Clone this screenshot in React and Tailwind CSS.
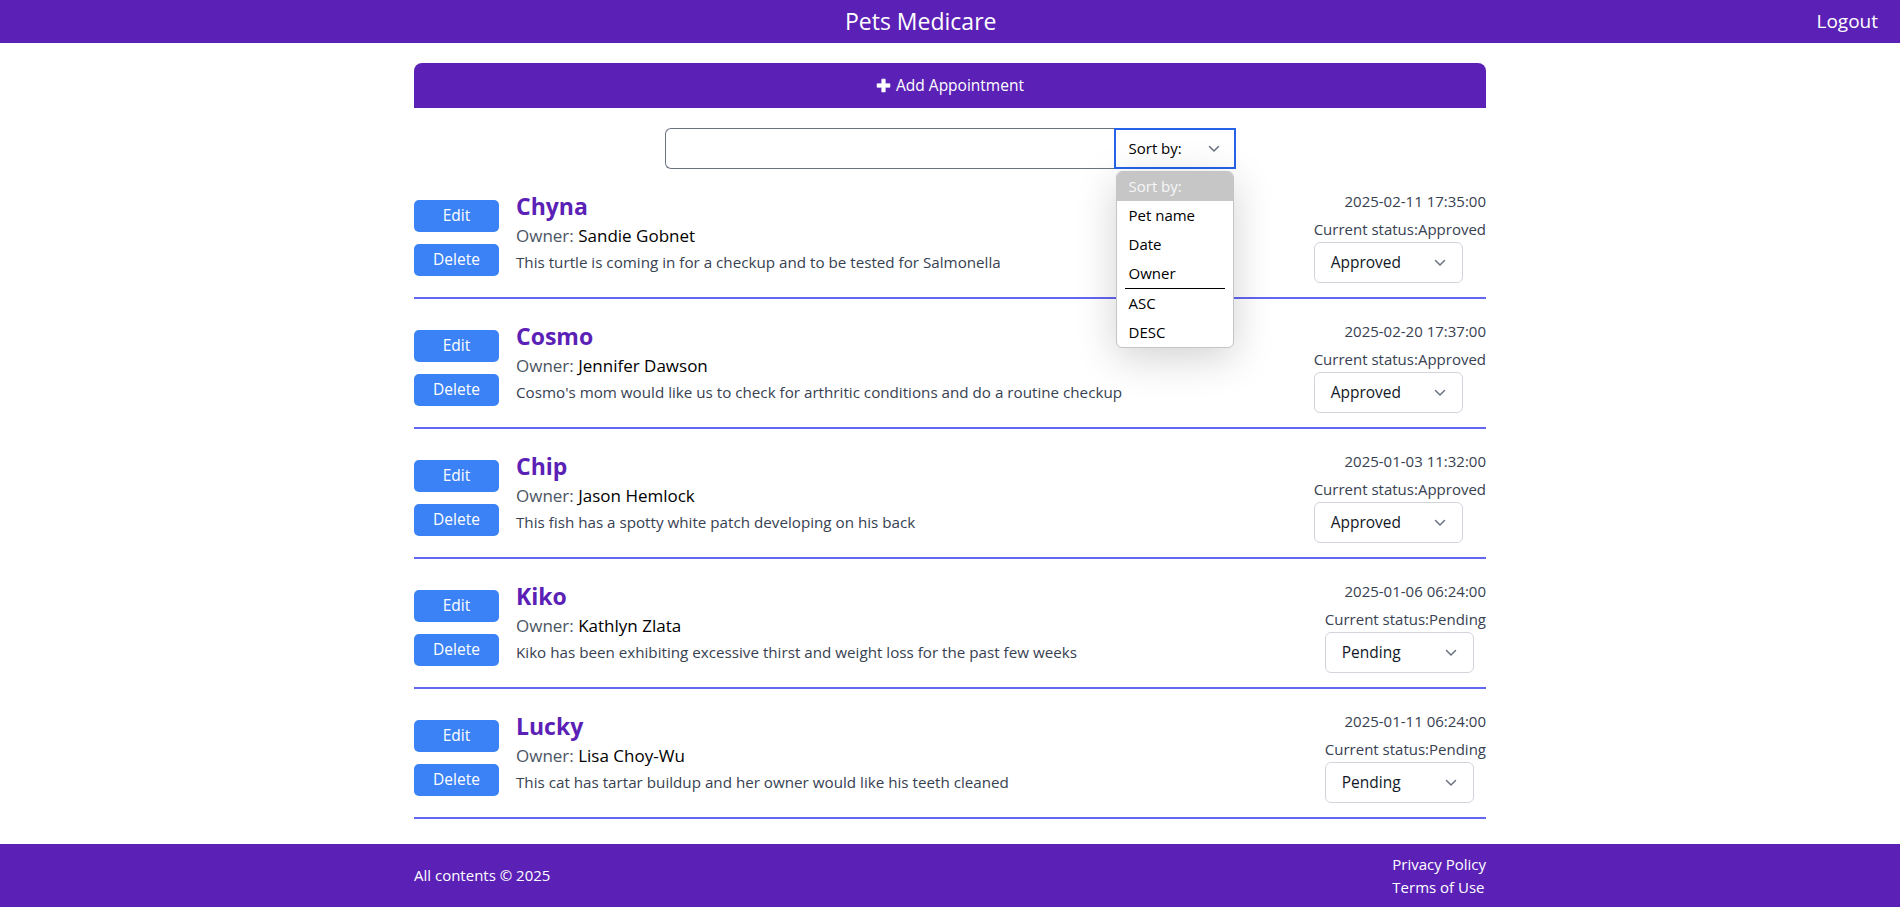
import React from "react";

const rows = [
  { name: "Chyna", owner: "Sandie Gobnet", desc: "This turtle is coming in for a checkup and to be tested for Salmonella", date: "2025-02-11 17:35:00", status: "Approved" },
  { name: "Cosmo", owner: "Jennifer Dawson", desc: "Cosmo's mom would like us to check for arthritic conditions and do a routine checkup", date: "2025-02-20 17:37:00", status: "Approved" },
  { name: "Chip", owner: "Jason Hemlock", desc: "This fish has a spotty white patch developing on his back", date: "2025-01-03 11:32:00", status: "Approved" },
  { name: "Kiko", owner: "Kathlyn Zlata", desc: "Kiko has been exhibiting excessive thirst and weight loss for the past few weeks", date: "2025-01-06 06:24:00", status: "Pending" },
  { name: "Lucky", owner: "Lisa Choy-Wu", desc: "This cat has tartar buildup and her owner would like his teeth cleaned", date: "2025-01-11 06:24:00", status: "Pending" },
];

function Chevron({ className }) {
  return (
    <svg className={className} width="12" height="8" viewBox="0 0 12 8" fill="none">
      <polyline points="1.5,1.5 6,6 10.5,1.5" stroke="#6b7280" strokeWidth="1.5" strokeLinecap="round" strokeLinejoin="round" />
    </svg>
  );
}

function Row({ r }) {
  return (
    <div className="flex items-center justify-between pt-5 pb-[14px] border-b-2 border-[#6366f1]">
      <div className="flex items-center">
        <div className="flex flex-col gap-3 pt-1">
          <button className="w-[85px] h-8 rounded-[5px] bg-[#3b82f6] text-white text-[15.5px]">Edit</button>
          <button className="w-[85px] h-8 rounded-[5px] bg-[#3b82f6] text-white text-[15.5px]">Delete</button>
        </div>
        <div className="ml-[17px] flex flex-col pb-2">
          <div className="text-[23px] leading-8 font-bold text-[#5b21b6]">{r.name}</div>
          <div className="text-[17px] leading-7 text-[#4b5563]">
            Owner: <span className="text-black">{r.owner}</span>
          </div>
          <div className="text-[15.2px] leading-6 text-[#374151]">{r.desc}</div>
        </div>
      </div>
      <div className="flex flex-col h-[94px] text-[15px] text-[#374151]">
        <div className="text-right leading-6">{r.date}</div>
        <div className="leading-6 mt-1">Current status:{r.status}</div>
        <div className="mt-[1px] w-[149px] h-[41px] rounded-md border border-[#d1d5db] flex items-center justify-between pl-[16px] pr-[16px] text-[15.5px] text-[#111827] bg-white">
          <span>{r.status}</span>
          <Chevron />
        </div>
      </div>
    </div>
  );
}

export default function App() {
  return (
    <div className="min-h-[907px] flex flex-col bg-white" style={{ fontFamily: '"Open Sans", "Noto Sans", sans-serif' }}>
      <header className="h-[43px] bg-[#5b21b6] flex items-center pl-[25px] pr-[22px] text-white">
        <div className="flex-1 text-center text-[23px]">Pets Medicare</div>
        <div className="text-[19px]">Logout</div>
      </header>
      <main className="flex-1 w-[1072px] mx-auto pb-[25px]">
        <button className="mt-5 w-full h-[45px] rounded-t-lg bg-[#5b21b6] text-white text-[15.5px] flex items-center justify-center gap-[5px]">
          <svg width="15" height="15" viewBox="0 0 16 16">
            <path d="M6.2 1.2h3.6v5h5v3.6h-5v5H6.2v-5h-5V6.2h5z" fill="white" stroke="white" strokeWidth="0.8" strokeLinejoin="round" />
          </svg>
          <span>Add Appointment</span>
        </button>
        <div className="mt-5 flex justify-center">
          <div className="w-[449px] h-[41px] rounded-l-md border border-r-0 border-[#6b7280] bg-white"></div>
          <div className="relative">
            <div className="w-[122px] h-[41px] border-2 border-[#2563eb] flex items-center justify-between pl-[13px] pr-[14px] text-[15px] text-black bg-white">
              <span>Sort by:</span>
              <Chevron />
            </div>
            <div className="absolute z-10 left-[2px] top-[43px] w-[118px] rounded-md border border-[#c4c4c4] bg-white overflow-hidden shadow-[0_10px_40px_rgba(0,0,0,0.18)] text-[15px] text-black">
              <div className="h-[29px] bg-[#c6c6c6] text-[#f7f7f7] pl-3 flex items-center">Sort by:</div>
              <div className="h-[29px] pl-3 flex items-center">Pet name</div>
              <div className="h-[29px] pl-3 flex items-center">Date</div>
              <div className="h-[29px] pl-3 flex items-center">Owner</div>
              <div className="mx-2 border-t border-black"></div>
              <div className="h-[29px] pl-3 flex items-center">ASC</div>
              <div className="h-[29px] pl-3 flex items-center">DESC</div>
            </div>
          </div>
        </div>
        <div>
          {rows.map((r) => (
            <Row key={r.name} r={r} />
          ))}
        </div>
      </main>
      <footer className="h-[63px] bg-[#5b21b6] text-white text-[15px]">
        <div className="w-[1072px] mx-auto h-full flex items-center justify-between">
          <div>All contents © 2025</div>
          <div className="flex flex-col leading-[23px]">
            <a>Privacy Policy</a>
            <a>Terms of Use</a>
          </div>
        </div>
      </footer>
    </div>
  );
}
